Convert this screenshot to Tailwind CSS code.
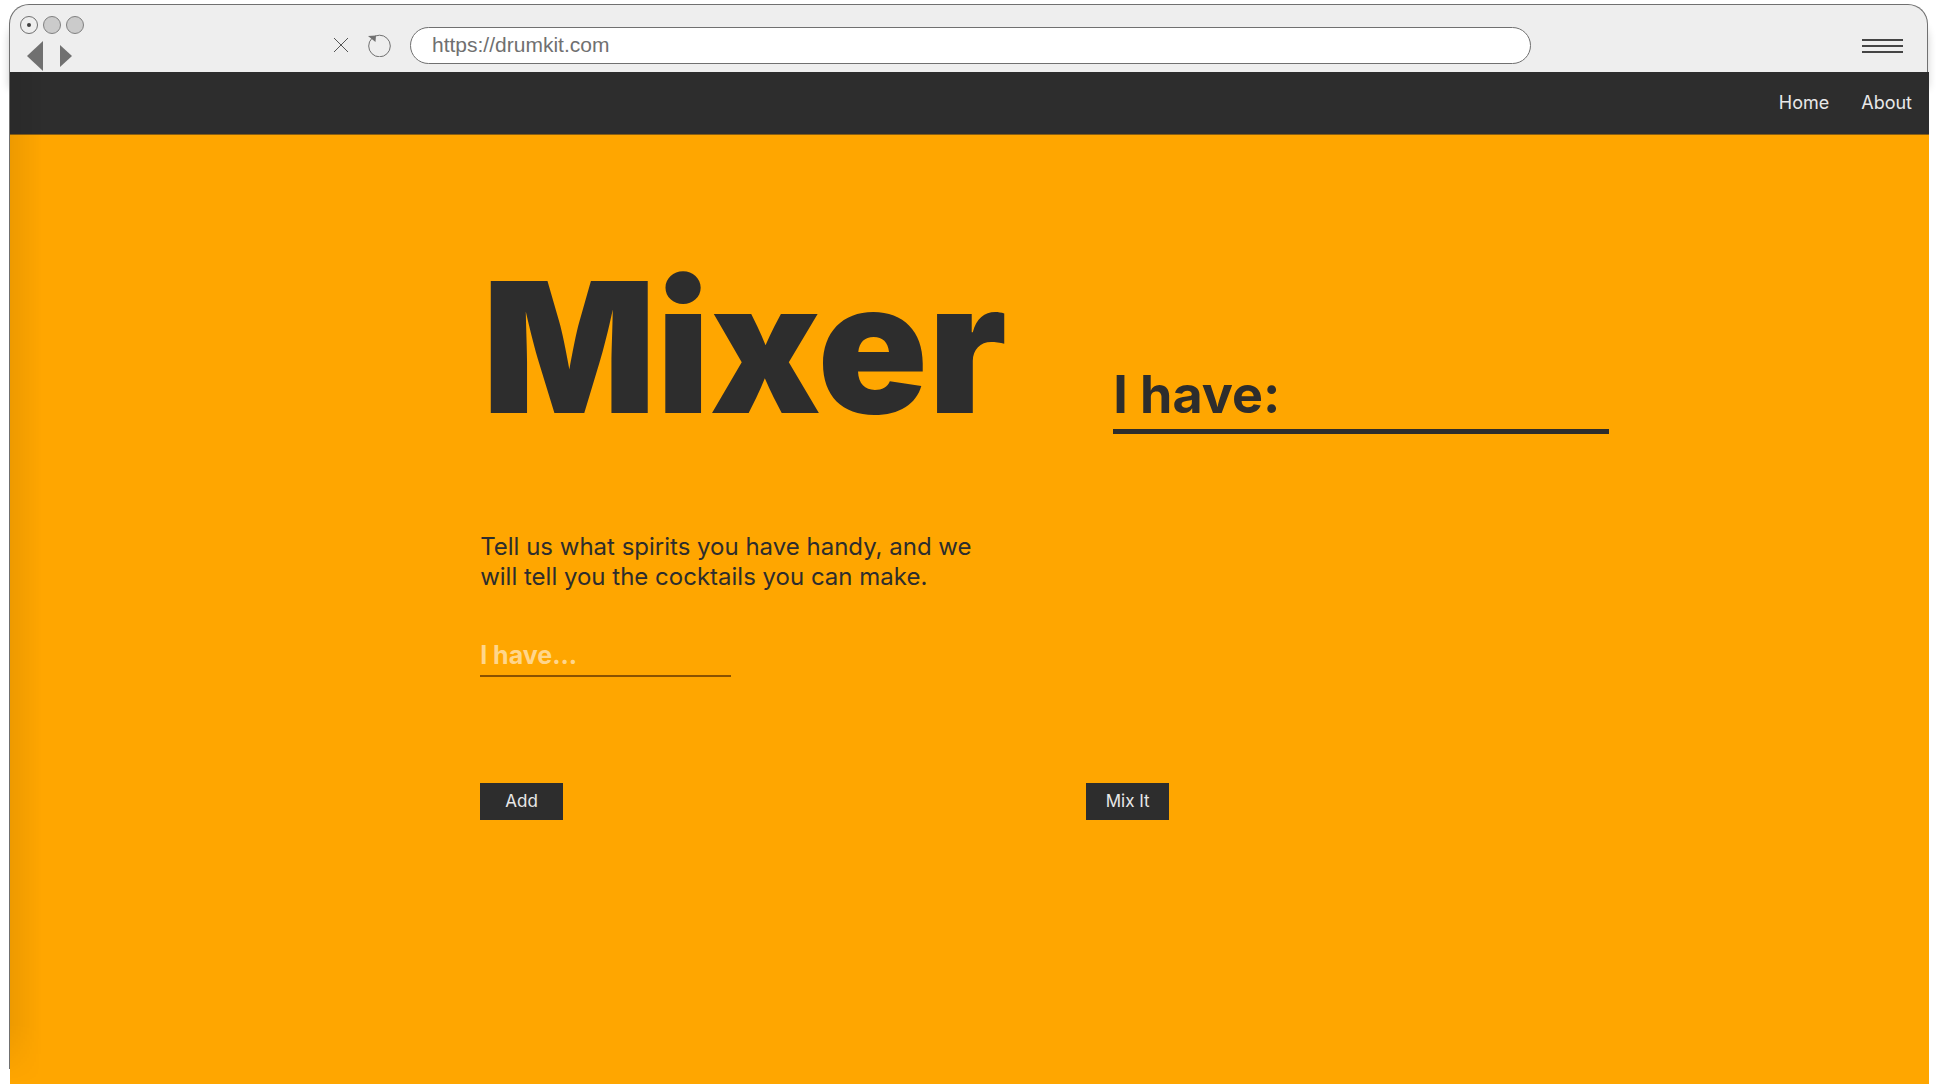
<!DOCTYPE html>
<html lang="en">
<head>
<meta charset="utf-8">
<title>Mixer</title>
<script src="https://cdn.jsdelivr.net/npm/@tailwindcss/browser@4"></script>
</head>
<body class="flex min-h-screen flex-col bg-white pt-1 font-['Inter',sans-serif] text-[#2d2d2d]">

<!-- Browser chrome -->
<header class="mr-[9px] ml-[9px] flex h-[68px] rounded-t-[20px] border border-b-0 border-[#707070] bg-[#eeeeee] shadow-[0_16px_8px_rgba(0,0,0,0.2)]">
  <div class="flex w-[312px] shrink-0 flex-col pt-[11px] pl-[10px]">
    <div class="flex gap-[5px]">
      <span class="flex size-[18px] items-center justify-center rounded-full border border-[#707070]"><span class="size-1 rounded-full bg-[#404040]"></span></span>
      <span class="size-[18px] rounded-full border border-[#808080] bg-[#cbcbcb]"></span>
      <span class="size-[18px] rounded-full border border-[#808080] bg-[#cbcbcb]"></span>
    </div>
    <div class="mt-[7px] flex items-center gap-[17px] pl-[7px]">
      <button type="button" aria-label="Back"><svg class="block" width="16" height="30" viewBox="0 0 16 30" fill="#707070"><path d="M16 0V30L0 15Z"/></svg></button>
      <button type="button" aria-label="Forward"><svg class="block" width="12" height="22" viewBox="0 0 12 22" fill="#707070"><path d="M0 0V22L12 11Z"/></svg></button>
    </div>
  </div>
  <div class="flex grow items-center pt-[21px] pb-2 pl-3">
    <button type="button" aria-label="Stop"><svg class="block" width="14" height="14" viewBox="0 0 14 14" fill="none" stroke="#555"><path d="M0 0L14 14M14 0L0 14"/></svg></button>
    <button type="button" class="ml-5" aria-label="Reload"><svg class="block" width="24" height="24" viewBox="0 0 24 24" fill="none" stroke="#707070"><circle cx="11.500" cy="13" r="10.800"/><path d="M0 3L8 2.500L7.500 9Z" fill="#707070" stroke="none"/></svg></button>
    <input type="text" aria-label="Address" value="https://drumkit.com" class="ml-[18px] h-[37px] min-w-0 grow rounded-full border border-[#707070] bg-white px-[21px] font-['Liberation_Sans',Arial,sans-serif] text-[21px] text-[#707070]">
    <button type="button" class="mr-6 ml-[331px]" aria-label="Menu"><svg class="block" width="41" height="15" viewBox="0 0 41 15" stroke="#444" stroke-width="2"><path d="M0 2H41M0 8H41M0 14H41"/></svg></button>
  </div>
</header>

<!-- Page -->
<div class="relative mr-2 ml-[10px] flex grow flex-col bg-[#ffa600]">
  <div class="pointer-events-none absolute top-0 bottom-[15px] -left-px w-px bg-[#707070]"></div>
  <nav class="flex h-[63px] items-center justify-end gap-8 border-b border-[#8a5f12] bg-[#2d2d2d] pr-[17px] text-lg text-[#e8e8e8]">
    <a href="#home">Home</a>
    <a href="#about">About</a>
  </nav>
  <div class="pointer-events-none absolute top-0 bottom-0 left-0 w-8 bg-linear-to-r from-black/7 to-transparent [mask-image:linear-gradient(to_top,transparent,black_60px)]"></div>

  <main class="pt-[125px] pl-[24.5%]">
    <div class="flex items-end gap-[137px]">
      <h1 class="w-[496px] pl-[2px] text-[182px] leading-[174px] font-black">Mixer</h1>
      <h2 class="w-[496px] border-b-[5px] border-[#2d2d2d] text-[52px] leading-[68px] font-bold">I have:</h2>
    </div>
    <form id="spirits" class="pt-[98px]">
      <p class="w-[510px] text-2xl leading-[30px]">Tell us what spirits you have handy, and we<br>will tell you the cocktails you can make.</p>
      <input type="text" aria-label="I have" placeholder="I have..." class="mt-[43px] block h-[42px] w-[251px] border-b-2 border-[#8a5200] text-[25px] font-bold placeholder:text-[#ffd68c]">
    </form>
    <div class="flex gap-[523px] pt-[106px]">
      <button type="submit" form="spirits" class="h-[37px] w-[83px] bg-[#2d2d2d] text-[17px] text-[#e8e8e8]">Add</button>
      <button type="button" class="h-[37px] w-[83px] bg-[#2d2d2d] text-[17px] text-[#e8e8e8]">Mix It</button>
    </div>
  </main>
</div>
</body>
</html>
